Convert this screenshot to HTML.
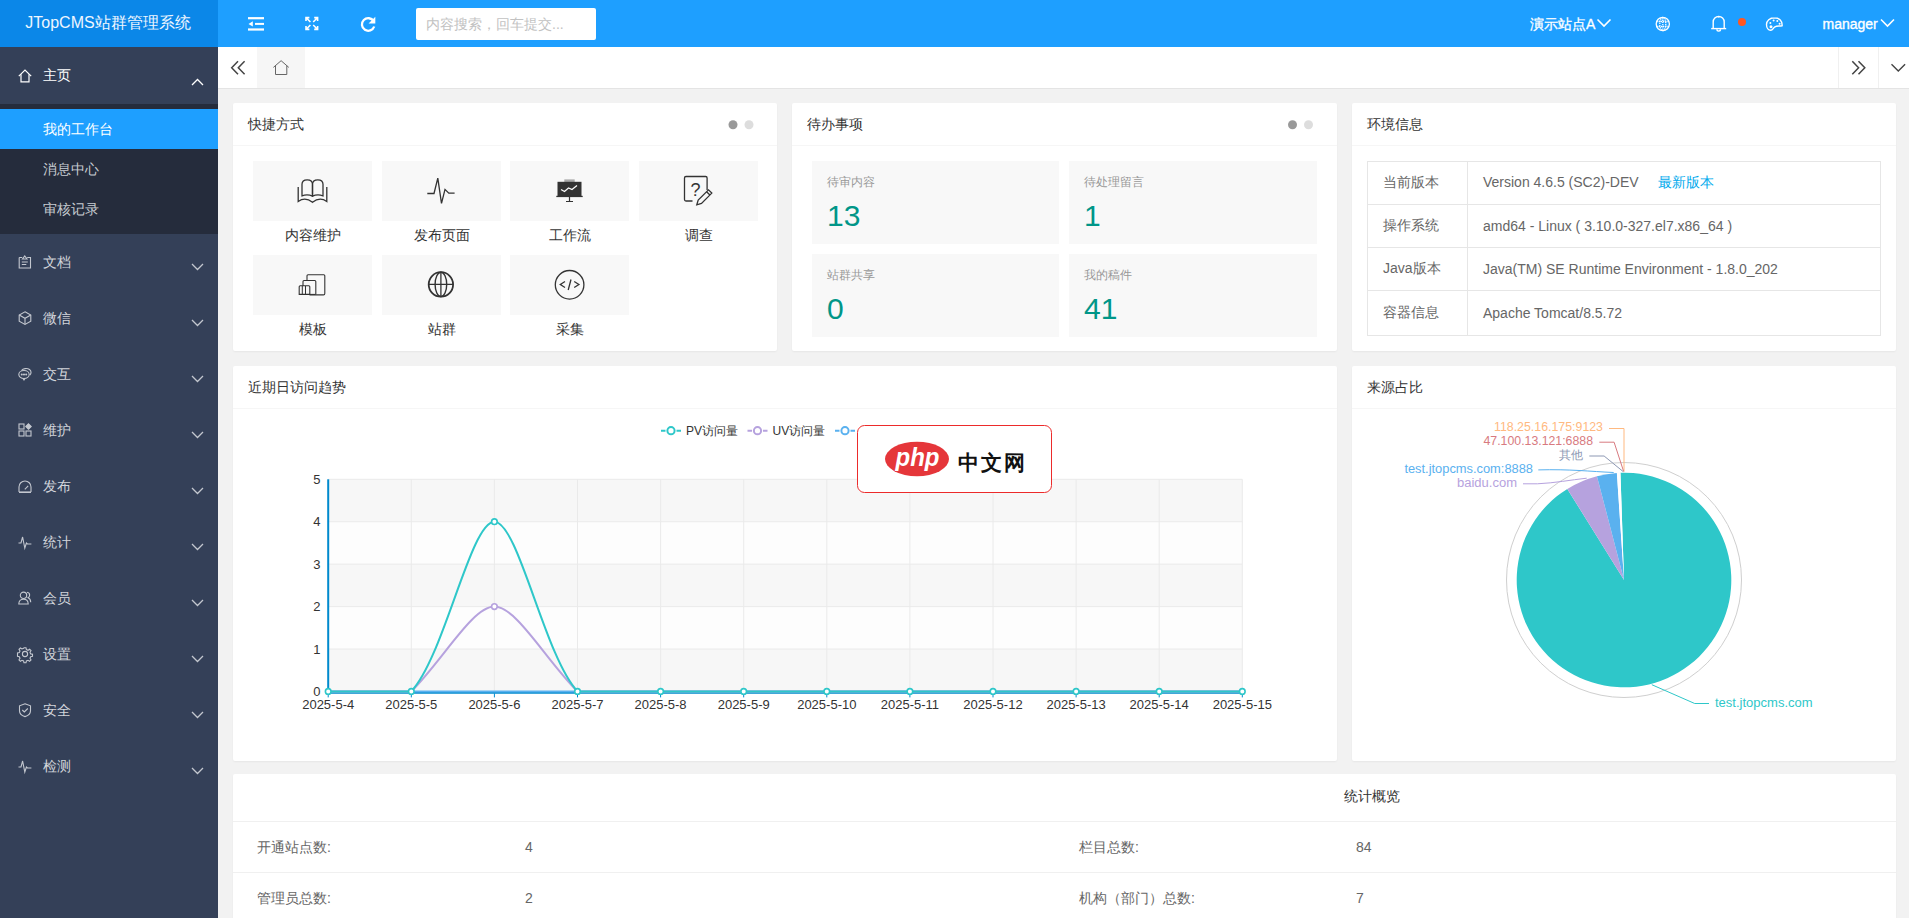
<!DOCTYPE html>
<html><head><meta charset="utf-8">
<style>
*{margin:0;padding:0;box-sizing:border-box}
html,body{width:1909px;height:918px;overflow:hidden}
body{background:#f2f2f2;font-family:"Liberation Sans",sans-serif;font-size:14px;color:#333;position:relative}
.a{position:absolute}
svg{position:absolute;overflow:visible}
.side{left:0;top:0;width:218px;height:918px;background:#344058}
.logo{left:0;top:0;width:218px;height:47px;background:#0b87e8;color:#eef6ff;font-size:16px;line-height:45px;text-align:center;white-space:nowrap;padding-right:2px}
.mi{left:0;width:218px;height:56px}
.mi .t{position:absolute;left:43px;top:0;line-height:56px;color:#d2d5db;font-size:14px}
.sub{left:0;top:104px;width:218px;height:130px;background:#252c3c}
.si{position:absolute;left:0;width:218px;height:40px;line-height:40px;padding-left:43px;color:#c8ccd2}
.top{left:218px;top:0;width:1691px;height:47px;background:#1e9fff}
.tabs{left:218px;top:47px;width:1691px;height:42px;background:#fff;border-bottom:1px solid #e4e4e4}
.card{background:#fff;border-radius:2px;box-shadow:0 1px 2px 0 rgba(0,0,0,.05)}
.ch{position:absolute;left:0;top:0;width:100%;height:43px;border-bottom:1px solid #f6f6f6;line-height:43px;padding-left:15px;font-size:14px;color:#333}
.qb{position:absolute;width:119px;height:60px;background:#f8f8f8}
.ql{position:absolute;width:119px;text-align:center;font-size:14px;color:#333;line-height:20px}
.tb{position:absolute;background:#f8f8f8}
.tb .l{position:absolute;left:15px;top:13px;font-size:12px;color:#999;line-height:16px}
.tb .n{position:absolute;left:15px;top:37px;font-size:30px;color:#009688;line-height:36px}
.env{position:absolute;border-collapse:collapse}
.env td{border:1px solid #e6e6e6;height:43px;padding:0 15px;color:#666;font-size:14px}
.st td{font-size:14px;color:#666}
</style></head><body>

<!-- SIDEBAR -->
<div class="a side">
  <div class="a logo">JTopCMS站群管理系统</div>
  <div class="a mi" style="top:47px;height:57px"><span class="t" style="color:#fff;line-height:57px">主页</span></div>
  <div class="a sub">
    <div class="si" style="top:5px;background:#1e9fff;color:#fff">我的工作台</div>
    <div class="si" style="top:45px">消息中心</div>
    <div class="si" style="top:85px">审核记录</div>
  </div>
  <div class="a mi" style="top:234px"><span class="t">文档</span></div>
  <div class="a mi" style="top:290px"><span class="t">微信</span></div>
  <div class="a mi" style="top:346px"><span class="t">交互</span></div>
  <div class="a mi" style="top:402px"><span class="t">维护</span></div>
  <div class="a mi" style="top:458px"><span class="t">发布</span></div>
  <div class="a mi" style="top:514px"><span class="t">统计</span></div>
  <div class="a mi" style="top:570px"><span class="t">会员</span></div>
  <div class="a mi" style="top:626px"><span class="t">设置</span></div>
  <div class="a mi" style="top:682px"><span class="t">安全</span></div>
  <div class="a mi" style="top:738px"><span class="t">检测</span></div>
</div>

<svg class="a" style="left:0;top:0" width="218" height="918"><g transform="translate(18,69)" fill="none" stroke="#fff" stroke-width="1.2"><path d="M0.8 7.2L7 1l6.2 6.2"/><path d="M3 5.3v7.5h8V5.3"/></g><path d="M192 85l5.5-5.5 5.5 5.5" fill="none" stroke="#fff" stroke-width="1.3"/><g transform="translate(18,255)" fill="none" stroke="#c3c7cf" stroke-width="1.1"><path d="M1.2 2.5h3M9.2 2.5h3.3v10.5H1.2V2.5"/><path d="M4.5 4h4.5l-2.25-3z"/><path d="M3.8 7h6M3.8 9.5h4.5"/></g><path d="M192 264l5.5 5.5 5.5-5.5" fill="none" stroke="#c3c7cf" stroke-width="1.3"/><g transform="translate(18,311)" fill="none" stroke="#c3c7cf" stroke-width="1.1"><path d="M7 0.8l5.8 3.2v6.2L7 13.4 1.2 10.2V4z"/><path d="M1.2 4L7 7.3 12.8 4M7 7.3v6"/></g><path d="M192 320l5.5 5.5 5.5-5.5" fill="none" stroke="#c3c7cf" stroke-width="1.3"/><g transform="translate(18,367)" fill="none" stroke="#c3c7cf" stroke-width="1.1"><path d="M3.5 3.5C5 1.5 9 0.8 11.5 2.5c2 1.5 2 4 0.3 5.7"/><ellipse cx="6" cy="7.5" rx="5.2" ry="4"/><path d="M5 11.5l1 1.5 1-1.5"/><circle cx="3.8" cy="7.5" r="0.5"/><circle cx="6" cy="7.5" r="0.5"/><circle cx="8.2" cy="7.5" r="0.5"/></g><path d="M192 376l5.5 5.5 5.5-5.5" fill="none" stroke="#c3c7cf" stroke-width="1.3"/><g transform="translate(18,423)" fill="none" stroke="#c3c7cf" stroke-width="1.1"><rect x="1" y="1" width="5" height="5"/><rect x="1" y="8" width="5" height="5"/><rect x="8" y="8" width="5" height="5"/><path d="M10.5 0.8l2.7 2.7-2.7 2.7-2.7-2.7z" fill="#c3c7cf"/></g><path d="M192 432l5.5 5.5 5.5-5.5" fill="none" stroke="#c3c7cf" stroke-width="1.3"/><g transform="translate(18,479)" fill="none" stroke="#c3c7cf" stroke-width="1.1"><path d="M1 13V8A6 6 0 0 1 13 8V13"/><path d="M1 13.2h12" stroke-width="1.6"/><path d="M6.8 10.3l3.4-3.4"/></g><path d="M192 488l5.5 5.5 5.5-5.5" fill="none" stroke="#c3c7cf" stroke-width="1.3"/><g transform="translate(18,535)" fill="none" stroke="#c3c7cf" stroke-width="1.1"><path d="M0.5 8h2.5l1.6-6 2.2 11 1.6-5 1 1h4"/></g><path d="M192 544l5.5 5.5 5.5-5.5" fill="none" stroke="#c3c7cf" stroke-width="1.3"/><g transform="translate(18,591)" fill="none" stroke="#c3c7cf" stroke-width="1.1"><circle cx="5.5" cy="4.3" r="3.2"/><path d="M0.8 13c0-3 2-4.8 4.7-4.8s4.7 1.8 4.7 4.8z"/><path d="M9 1.3c1.8 0.3 2.8 1.5 2.6 3.2-.1 1-.7 1.8-1.5 2.2 1.6.6 2.6 2.3 2.6 4.5"/></g><path d="M192 600l5.5 5.5 5.5-5.5" fill="none" stroke="#c3c7cf" stroke-width="1.3"/><g transform="translate(18,647)" fill="none" stroke="#c3c7cf" stroke-width="1.1"><circle cx="7" cy="7" r="2.6"/><path d="M6 0.8h2l.4 1.8 1.6.7 1.6-1 1.4 1.4-1 1.6.7 1.6 1.8.4v2l-1.8.4-.7 1.6 1 1.6-1.4 1.4-1.6-1-1.6.7-.4 1.8H6l-.4-1.8-1.6-.7-1.6 1-1.4-1.4 1-1.6-.7-1.6-1.8-.4V6l1.8-.4.7-1.6-1-1.6 1.4-1.4 1.6 1 1.6-.7z"/></g><path d="M192 656l5.5 5.5 5.5-5.5" fill="none" stroke="#c3c7cf" stroke-width="1.3"/><g transform="translate(18,703)" fill="none" stroke="#c3c7cf" stroke-width="1.1"><path d="M7 0.8l5.5 2v5c0 3-2.5 5-5.5 5.8C4 12.8 1.5 10.8 1.5 7.8v-5z"/><path d="M4.3 7l2 2 3.5-3.5"/></g><path d="M192 712l5.5 5.5 5.5-5.5" fill="none" stroke="#c3c7cf" stroke-width="1.3"/><g transform="translate(18,759)" fill="none" stroke="#c3c7cf" stroke-width="1.1"><path d="M0.5 8h2.5l1.6-6 2.2 11 1.6-5 1 1h4"/></g><path d="M192 768l5.5 5.5 5.5-5.5" fill="none" stroke="#c3c7cf" stroke-width="1.3"/></svg>

<!-- TOPBAR -->
<div class="a top"></div>
<div class="a" style="left:416px;top:8px;width:180px;height:32px;background:#fff;border-radius:2px;color:#c2c2c2;font-size:14px;line-height:32px;padding-left:10px;white-space:nowrap">内容搜索，回车提交...</div>

<!-- TABS -->
<div class="a tabs"></div>
<div class="a" style="left:257px;top:47px;width:48px;height:41px;background:#f6f6f6"></div>
<div class="a" style="left:1838px;top:47px;width:1px;height:41px;background:#f0f0f0"></div>
<div class="a" style="left:1878px;top:47px;width:1px;height:41px;background:#f0f0f0"></div>

<!-- CARD 1 quick -->
<div class="a card" style="left:233px;top:103px;width:544px;height:248px">
  <div class="ch">快捷方式</div>
  <div class="qb" style="left:20px;top:58px"></div>
  <div class="qb" style="left:149px;top:58px"></div>
  <div class="qb" style="left:277px;top:58px"></div>
  <div class="qb" style="left:406px;top:58px"></div>
  <div class="qb" style="left:20px;top:152px"></div>
  <div class="qb" style="left:149px;top:152px"></div>
  <div class="qb" style="left:277px;top:152px"></div>
  <div class="ql" style="left:20px;top:122px">内容维护</div>
  <div class="ql" style="left:149px;top:122px">发布页面</div>
  <div class="ql" style="left:277px;top:122px">工作流</div>
  <div class="ql" style="left:406px;top:122px">调查</div>
  <div class="ql" style="left:20px;top:216px">模板</div>
  <div class="ql" style="left:149px;top:216px">站群</div>
  <div class="ql" style="left:277px;top:216px">采集</div>
</div>

<!-- CARD 2 todo -->
<div class="a card" style="left:792px;top:103px;width:545px;height:248px">
  <div class="ch">待办事项</div>
  <div class="tb" style="left:20px;top:58px;width:247px;height:83px"><div class="l">待审内容</div><div class="n">13</div></div>
  <div class="tb" style="left:277px;top:58px;width:248px;height:83px"><div class="l">待处理留言</div><div class="n">1</div></div>
  <div class="tb" style="left:20px;top:151px;width:247px;height:83px"><div class="l">站群共享</div><div class="n">0</div></div>
  <div class="tb" style="left:277px;top:151px;width:248px;height:83px"><div class="l">我的稿件</div><div class="n">41</div></div>
</div>

<!-- CARD 3 env -->
<div class="a card" style="left:1352px;top:103px;width:544px;height:248px">
  <div class="ch">环境信息</div>
  <table class="env" style="left:15px;top:58px;width:514px">
    <tr><td style="width:100px">当前版本</td><td>Version 4.6.5 (SC2)-DEV<span style="color:#01aaed;margin-left:19px">最新版本</span></td></tr>
    <tr><td>操作系统</td><td>amd64 - Linux ( 3.10.0-327.el7.x86_64 )</td></tr>
    <tr><td>Java版本</td><td>Java(TM) SE Runtime Environment - 1.8.0_202</td></tr>
    <tr><td style="height:45px">容器信息</td><td>Apache Tomcat/8.5.72</td></tr>
  </table>
</div>

<!-- CARD 4 line chart -->
<div class="a card" style="left:233px;top:366px;width:1104px;height:395px">
  <div class="ch">近期日访问趋势</div>
</div>

<!-- CARD 5 pie -->
<div class="a card" style="left:1352px;top:366px;width:544px;height:395px">
  <div class="ch">来源占比</div>
</div>

<!-- CARD 6 stats -->
<div class="a card" style="left:233px;top:774px;width:1663px;height:160px">
</div>
<div class="a" style="left:233px;top:821px;width:1663px;height:1px;background:#f0f0f0"></div>
<div class="a" style="left:233px;top:872px;width:1663px;height:1px;background:#f0f0f0"></div>
<div class="a st" style="left:1344px;top:787px;font-size:14px;line-height:18px;color:#333">统计概览</div>
<div class="a" style="left:257px;top:838px;font-size:14px;line-height:18px;color:#666">开通站点数:</div>
<div class="a" style="left:525px;top:838px;font-size:14px;line-height:18px;color:#666">4</div>
<div class="a" style="left:1079px;top:838px;font-size:14px;line-height:18px;color:#666">栏目总数:</div>
<div class="a" style="left:1356px;top:838px;font-size:14px;line-height:18px;color:#666">84</div>
<div class="a" style="left:257px;top:889px;font-size:14px;line-height:18px;color:#666">管理员总数:</div>
<div class="a" style="left:525px;top:889px;font-size:14px;line-height:18px;color:#666">2</div>
<div class="a" style="left:1079px;top:889px;font-size:14px;line-height:18px;color:#666">机构（部门）总数:</div>
<div class="a" style="left:1356px;top:889px;font-size:14px;line-height:18px;color:#666">7</div>
<div class="a" style="left:1530px;top:15px;font-size:14px;line-height:18px;color:#fff;-webkit-text-stroke:0.3px #fff">演示站点A</div>
<div class="a" style="left:1822.5px;top:15px;font-size:14px;line-height:18px;color:#fff;-webkit-text-stroke:0.35px #fff">manager</div>


<svg class="a" style="left:0;top:0" width="1909" height="918">
<!-- topbar icons -->
<g fill="#fff">
  <rect x="248" y="17.1" width="16" height="2.2"/>
  <rect x="255" y="22.9" width="9" height="2"/>
  <path d="M248.5 23.9l4.3-2.7v5.3z"/>
  <rect x="248" y="28.4" width="16" height="2.2"/>
</g>
<g fill="none" stroke="#fff" stroke-width="1.6">
  <path d="M306 21v-3.4h3.4M306.2 17.8l4.2 4.2"/>
  <path d="M317.6 21v-3.4h-3.4M317.4 17.8l-4.2 4.2"/>
  <path d="M306 26v3.4h3.4M306.2 29.2l4.2-4.2"/>
  <path d="M317.6 26v3.4h-3.4M317.4 29.2l-4.2-4.2"/>
</g>
<path d="M373.6 21.2A6.3 6.3 0 1 0 374.2 26.5" fill="none" stroke="#fff" stroke-width="2.3"/>
<path d="M375.3 16.8v6.7h-6.7z" fill="#fff"/>
<!-- right -->
<g fill="none" stroke="#fff" stroke-width="1.3">
  <circle cx="1662.8" cy="24" r="6.6"/>
  <ellipse cx="1662.8" cy="24" rx="3" ry="6.6" stroke-dasharray="1.3 0.9"/>
  <path d="M1656.4 21.5h12.8M1656.4 26.5h12.8M1662.8 17.4v13.2" stroke-dasharray="1.3 0.9"/>
</g>
<g fill="none" stroke="#fff" stroke-width="1.4">
  <path d="M1713.2 28.3v-6.3a5.5 5.5 0 0 1 11 0v6.3"/>
  <path d="M1711.2 28.6h15"/>
  <path d="M1716.9 29.3a1.8 1.8 0 0 0 3.6 0"/>
  <path d="M1718.7 16.3v1.2"/>
</g>
<circle cx="1742" cy="21.9" r="4" fill="#ff5722"/>
<g fill="none" stroke="#fff" stroke-width="1.4">
  <path d="M1774.5 17.8c-4.8 0-8 3.2-8 6.8 0 3.2 1.8 5.7 4.2 5.7 2.2 0 2.3-2.3 4.2-3.5 2-1.2 4.6-.4 7.2-1 .4-4.8-2.8-8-7.6-8z"/>
</g>
<g fill="#fff">
  <circle cx="1770.4" cy="23" r="1"/><circle cx="1773.6" cy="20.6" r="1"/><circle cx="1777.3" cy="21" r="1"/><circle cx="1779.6" cy="23.7" r="1"/><circle cx="1771" cy="26.8" r="1.5"/>
</g>
<path d="M1597.5 19.5l6.5 6.5 6.5-6.5" fill="none" stroke="#fff" stroke-width="1.6"/>
<path d="M1881 19.5l6.5 6.5 6.5-6.5" fill="none" stroke="#fff" stroke-width="1.6"/>
<!-- tabs icons -->
<g fill="none" stroke="#444" stroke-width="1.5">
  <path d="M238 61.3l-6.3 6.5 6.3 6.5M244.6 61.3l-6.3 6.5 6.3 6.5"/>
  <path d="M273.4 67.4l7.7-6.7 7.7 6.7M275.5 65.7v8.8h11.3v-8.8" stroke="#666" stroke-width="1"/>
  <path d="M1852.3 61.3l6.3 6.5-6.3 6.5M1858.5 61.3l6.3 6.5-6.3 6.5"/>
  <path d="M1891.5 64.2l6.8 6.8 6.8-6.8" stroke-width="1.4"/>
</g>
<!-- dots -->
<circle cx="733" cy="124.7" r="4.5" fill="#999"/><circle cx="749" cy="124.7" r="4.5" fill="#ddd"/>
<circle cx="1292.5" cy="124.7" r="4.5" fill="#999"/><circle cx="1308.5" cy="124.7" r="4.5" fill="#ddd"/>
<!-- quick icons -->
<g fill="none" stroke="#333" stroke-width="1.3">
  <path d="M302 195.8V184.3q0-4.5 5.2-4.5q5.3 0 5.3 4.5v11.8q-5-2.2-10.5-.3z"/>
  <path d="M323 195.8V184.3q0-4.5-5.2-4.5q-5.3 0-5.3 4.5v11.8q5-2.2 10.5-.3z"/>
  <path d="M298.2 187v14.5q7-5 14.3.8q7.3-5.8 14.3-.8V187"/>
  <path d="M427.3 193.5h6.7l3.8-15.3 3.7 25.2 3.5-14 3.8 3.8h5.8"/>
  <path d="M692.5 201h-6.5q-1.5 0-1.5-1.5v-21.5q0-1.5 1.5-1.5h19.6q1.5 0 1.5 1.5v12"/>
  <path d="M696.8 204.8l1.4-4.7 10.3-10.3 3.3 3.3-10.3 10.3z M706.6 191.7l3.3 3.3"/>
  <circle cx="440.9" cy="284.4" r="12.2" stroke-width="1.8"/>
  <ellipse cx="440.9" cy="284.4" rx="5.8" ry="12.2" stroke-width="1.4"/>
  <path d="M440.9 272.2v24.4M428.7 284.4h24.4" stroke-width="1.3"/>
  <circle cx="569.6" cy="284.8" r="14.3" stroke-width="1.3"/>
  <path d="M565 281.5l-4.7 3 4.7 3M574.2 281.5l4.7 3-4.7 3M571 279.5l-2.8 10.5" stroke-width="1.3"/>
  <path d="M299.2 294.4v-7.6q0-1 1-1h8.6q1 0 1 1v7.6z" stroke-width="1.1"/>
  <path d="M303 286v-4.5q0-1 1-1h10.8q1 0 1 1v12.9" stroke-width="1.1"/>
  <path d="M307 281v-5.2q0-1 1-1h15.8q1 0 1 1v17.6q0 1.5-1.3 1.5h-14" stroke-width="1.1"/>
  <path d="M302.3 286v8.2M305.5 286v8.2M309 294.4h6.5" stroke-width="1"/>
</g>
<text x="695.5" y="195.5" font-size="18" fill="#333" text-anchor="middle" font-family="Liberation Sans">?</text>
<g>
  <rect x="564.3" y="179.4" width="10.4" height="2.6" fill="#aaa"/>
  <rect x="557.5" y="181.8" width="24" height="14.6" fill="#333"/>
  <rect x="556.3" y="195.8" width="26.4" height="1.3" fill="#333"/>
  <path d="M569.5 197v4.3M566 201.5h7" stroke="#333" stroke-width="1.2"/>
  <path d="M561 189.5l3.5 2 4-3.5 3.5 1.5 5-4" fill="none" stroke="#fff" stroke-width="1.2"/>
</g>
</svg>

<svg class="a" style="left:0;top:0" width="1909" height="918">
<rect x="328.2" y="479.3" width="914.1" height="42.4" fill="#f7f7f7"/>
<rect x="328.2" y="521.7" width="914.1" height="42.4" fill="#fdfdfd"/>
<rect x="328.2" y="564.1" width="914.1" height="42.4" fill="#f7f7f7"/>
<rect x="328.2" y="606.6" width="914.1" height="42.4" fill="#fdfdfd"/>
<rect x="328.2" y="649.0" width="914.1" height="42.4" fill="#f7f7f7"/>
<path d="M411.3 479.3V691.4M494.4 479.3V691.4M577.5 479.3V691.4M660.6 479.3V691.4M743.7 479.3V691.4M826.8 479.3V691.4M909.9 479.3V691.4M993.0 479.3V691.4M1076.1 479.3V691.4M1159.2 479.3V691.4M1242.3 479.3V691.4M328.2 649.0H1242.3M328.2 606.6H1242.3M328.2 564.1H1242.3M328.2 521.7H1242.3M328.2 479.3H1242.3" stroke="#eaeaea" stroke-width="1" fill="none"/>
<path d="M328.2 479.3V692.9" stroke="#008acd" stroke-width="2"/>
<path d="M327.2 692.6H1243.3" stroke="#008acd" stroke-width="2.2"/>
<path d="M328.2 693.4v4M411.3 693.4v4M494.4 693.4v4M577.5 693.4v4M660.6 693.4v4M743.7 693.4v4M826.8 693.4v4M909.9 693.4v4M993.0 693.4v4M1076.1 693.4v4M1159.2 693.4v4M1242.3 693.4v4" stroke="#008acd" stroke-width="1"/>
<text x="320.5" y="696.1" text-anchor="end" font-size="13" fill="#333">0</text>
<text x="320.5" y="653.6" text-anchor="end" font-size="13" fill="#333">1</text>
<text x="320.5" y="611.2" text-anchor="end" font-size="13" fill="#333">2</text>
<text x="320.5" y="568.8" text-anchor="end" font-size="13" fill="#333">3</text>
<text x="320.5" y="526.4" text-anchor="end" font-size="13" fill="#333">4</text>
<text x="320.5" y="483.9" text-anchor="end" font-size="13" fill="#333">5</text>
<text x="328.2" y="708.9" text-anchor="middle" font-size="13" fill="#333">2025-5-4</text>
<text x="411.3" y="708.9" text-anchor="middle" font-size="13" fill="#333">2025-5-5</text>
<text x="494.4" y="708.9" text-anchor="middle" font-size="13" fill="#333">2025-5-6</text>
<text x="577.5" y="708.9" text-anchor="middle" font-size="13" fill="#333">2025-5-7</text>
<text x="660.6" y="708.9" text-anchor="middle" font-size="13" fill="#333">2025-5-8</text>
<text x="743.7" y="708.9" text-anchor="middle" font-size="13" fill="#333">2025-5-9</text>
<text x="826.8" y="708.9" text-anchor="middle" font-size="13" fill="#333">2025-5-10</text>
<text x="909.9" y="708.9" text-anchor="middle" font-size="13" fill="#333">2025-5-11</text>
<text x="993.0" y="708.9" text-anchor="middle" font-size="13" fill="#333">2025-5-12</text>
<text x="1076.1" y="708.9" text-anchor="middle" font-size="13" fill="#333">2025-5-13</text>
<text x="1159.2" y="708.9" text-anchor="middle" font-size="13" fill="#333">2025-5-14</text>
<text x="1242.3" y="708.9" text-anchor="middle" font-size="13" fill="#333">2025-5-15</text>
<path d="M328.2 691.4H1242.3" stroke="#5ab1ef" stroke-width="2" fill="none"/>
<path d="M328.2 691.4H411.3C443.3 659.4 472.4 606.6 494.4 606.6C516.4 606.6 545.5 659.4 577.5 691.4H1242.3" stroke="#b6a2de" stroke-width="2" fill="none"/>
<path d="M328.2 691.4H411.3C444.3 656.4 470.4 521.8 494.4 521.8C518.4 521.8 544.5 656.4 577.5 691.4H1242.3" stroke="#2ec7c9" stroke-width="2" fill="none"/>
<circle cx="328.2" cy="691.4" r="2.8" fill="#fff" stroke="#2ec7c9" stroke-width="1.6"/>
<circle cx="411.3" cy="691.4" r="2.8" fill="#fff" stroke="#2ec7c9" stroke-width="1.6"/>
<circle cx="494.4" cy="606.6" r="2.8" fill="#fff" stroke="#b6a2de" stroke-width="1.6"/>
<circle cx="494.4" cy="521.7" r="2.8" fill="#fff" stroke="#2ec7c9" stroke-width="1.6"/>
<circle cx="577.5" cy="691.4" r="2.8" fill="#fff" stroke="#2ec7c9" stroke-width="1.6"/>
<circle cx="660.6" cy="691.4" r="2.8" fill="#fff" stroke="#2ec7c9" stroke-width="1.6"/>
<circle cx="743.7" cy="691.4" r="2.8" fill="#fff" stroke="#2ec7c9" stroke-width="1.6"/>
<circle cx="826.8" cy="691.4" r="2.8" fill="#fff" stroke="#2ec7c9" stroke-width="1.6"/>
<circle cx="909.9" cy="691.4" r="2.8" fill="#fff" stroke="#2ec7c9" stroke-width="1.6"/>
<circle cx="993.0" cy="691.4" r="2.8" fill="#fff" stroke="#2ec7c9" stroke-width="1.6"/>
<circle cx="1076.1" cy="691.4" r="2.8" fill="#fff" stroke="#2ec7c9" stroke-width="1.6"/>
<circle cx="1159.2" cy="691.4" r="2.8" fill="#fff" stroke="#2ec7c9" stroke-width="1.6"/>
<circle cx="1242.3" cy="691.4" r="2.8" fill="#fff" stroke="#2ec7c9" stroke-width="1.6"/>
<path d="M661.0 430.7h4.5M676.5 430.7h4.5" stroke="#2ec7c9" stroke-width="2"/><circle cx="671.0" cy="430.7" r="3.6" fill="#fff" stroke="#2ec7c9" stroke-width="2"/><text x="686.0" y="434.8" font-size="12" fill="#333">PV访问量</text>
<path d="M747.5 430.7h4.5M763.0 430.7h4.5" stroke="#b6a2de" stroke-width="2"/><circle cx="757.5" cy="430.7" r="3.6" fill="#fff" stroke="#b6a2de" stroke-width="2"/><text x="772.5" y="434.8" font-size="12" fill="#333">UV访问量</text>
<path d="M835.0 430.7h4.5M850.5 430.7h4.5" stroke="#5ab1ef" stroke-width="2"/><circle cx="845.0" cy="430.7" r="3.6" fill="#fff" stroke="#5ab1ef" stroke-width="2"/><text x="860.0" y="434.8" font-size="12" fill="#333">IP访问量</text>
<rect x="857.5" y="425.5" width="194" height="67" rx="7" fill="#fff" stroke="#ec2b2b" stroke-width="1"/>
<ellipse cx="917" cy="459" rx="32" ry="17.2" fill="#e5363a"/>
<text x="917.5" y="466" text-anchor="middle" font-size="25" font-weight="bold" font-style="italic" fill="#fff" textLength="44" lengthAdjust="spacingAndGlyphs">php</text>
<text x="958" y="469.5" font-size="21" font-weight="bold" fill="#111" textLength="67" lengthAdjust="spacing">中文网</text>
</svg>
<svg class="a" style="left:0;top:0" width="1909" height="918">
<circle cx="1624.0" cy="580.0" r="117.5" fill="none" stroke="#cfcfcf" stroke-width="1"/>
<path d="M1624.0 580.0L1620.44 472.76A107.3 107.3 0 1 1 1567.30 488.91z" fill="#2ec7c9"/>
<path d="M1624.0 580.0L1567.30 488.91A107.3 107.3 0 0 1 1596.95 476.16z" fill="#b6a2de"/>
<path d="M1624.0 580.0L1596.95 476.16A107.3 107.3 0 0 1 1616.89 472.94z" fill="#5ab1ef"/>
<path d="M1624.0 580.0L1616.89 472.94A107.3 107.3 0 0 1 1620.44 472.76z" fill="#ffffff"/>
<path d="M1609 428.5H1624V471.6" fill="none" stroke="#ffb980" stroke-width="1"/>
<path d="M1599.3 442.2H1614.1L1623.7 471.6" fill="none" stroke="#d87a80" stroke-width="1"/>
<path d="M1589.3 456H1604.1L1623.2 471.6" fill="none" stroke="#8d98b3" stroke-width="1"/>
<path d="M1538.3 469.9C1570 469 1590 471.5 1613.7 472.5" fill="none" stroke="#5ab1ef" stroke-width="1"/>
<path d="M1523 483.8H1537.4C1555 483 1570 480 1586.7 478.2" fill="none" stroke="#b6a2de" stroke-width="1"/>
<path d="M1651.8 684.7L1694.7 703.5H1709" fill="none" stroke="#2ec7c9" stroke-width="1"/>
<text x="1603" y="431.3" text-anchor="end" font-size="12" textLength="109" lengthAdjust="spacingAndGlyphs" fill="#ffb980">118.25.16.175:9123</text>
<text x="1593" y="445.3" text-anchor="end" font-size="12" textLength="109.5" lengthAdjust="spacingAndGlyphs" fill="#d87a80">47.100.13.121:6888</text>
<text x="1583" y="459.3" text-anchor="end" font-size="12" fill="#8d98b3">其他</text>
<text x="1533" y="473.3" text-anchor="end" font-size="12" textLength="128.6" lengthAdjust="spacingAndGlyphs" fill="#5ab1ef">test.jtopcms.com:8888</text>
<text x="1517" y="487.3" text-anchor="end" font-size="12" textLength="60" lengthAdjust="spacingAndGlyphs" fill="#b6a2de">baidu.com</text>
<text x="1715" y="707.3" text-anchor="start" font-size="12" textLength="97.6" lengthAdjust="spacingAndGlyphs" fill="#2ec7c9">test.jtopcms.com</text>
</svg>
</body></html>
